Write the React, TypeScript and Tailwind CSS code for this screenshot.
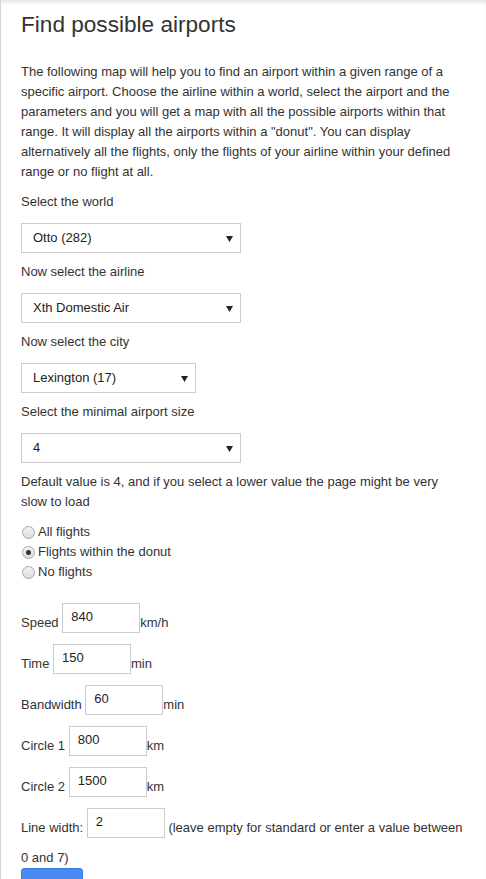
import React from "react";

const font = { fontFamily: '"Liberation Sans", Arial, sans-serif' };

function Select({ value, width }: { value: string; width: string }) {
  return (
    <div className={`relative mt-[11px] h-[30px] ${width} border border-[#cccccc] bg-white`}>
      <div className="pl-[11px] leading-[28px] text-[13px] text-[#222]">{value}</div>
      <svg className="absolute right-[7px] top-[12px]" width="7" height="6" viewBox="0 0 7 6">
        <polygon points="0,0 7,0 3.5,6" fill="#222" />
      </svg>
    </div>
  );
}

function Field({ label, value, unit, w = "w-[78px]" }: { label: string; value: string; unit: string; w?: string }) {
  return (
    <div className="flex items-end h-[30px] mb-[11px]">
      <span className="leading-5">{label}&nbsp;</span>
      <div className={`h-[30px] ${w} border border-[#cccccc] bg-white pl-[8px] leading-[26px] text-[13px] text-[#222]`}>{value}</div>
      <span className="leading-5">{unit}</span>
    </div>
  );
}

function Radio({ label, checked }: { label: string; checked?: boolean }) {
  return (
    <div className="flex items-center h-5">
      <span className="ml-[1px] mr-[3px] w-[13px] h-[13px] rounded-full border border-[#a8a8a8] bg-gradient-to-b from-[#f4f4f4] to-[#dcdcdc] flex items-center justify-center">
        {checked && <span className="w-[5px] h-[5px] rounded-full bg-[#333]" />}
      </span>
      <span>{label}</span>
    </div>
  );
}

export default function App() {
  return (
    <div style={font} className="min-h-[879px] bg-white border-l border-[#d4d4d4] shadow-[inset_0_4px_4px_-2px_rgba(0,0,0,0.12)] text-[13px] leading-5 text-[#333] pl-[20px] pr-[20px] overflow-hidden h-[879px]">
      <h1 className="pt-[12px] text-[22.6px] leading-[26px] text-[#333] font-normal">Find possible airports</h1>
      <p className="mt-[24px] mb-[10px]">
        The following map will help you to find an airport within a given range of a specific airport. Choose the airline within a world, select the airport and the parameters and you will get a map with all the possible airports within that range. It will display all the airports within a "donut". You can display alternatively all the flights, only the flights of your airline within your defined range or no flight at all.
      </p>
      <div>Select the world</div>
      <Select value="Otto (282)" width="w-[220px]" />
      <div className="mt-[9px]">Now select the airline</div>
      <Select value="Xth Domestic Air" width="w-[220px]" />
      <div className="mt-[9px]">Now select the city</div>
      <Select value="Lexington (17)" width="w-[175px]" />
      <div className="mt-[9px]">Select the minimal airport size</div>
      <Select value="4" width="w-[220px]" />
      <p className="mt-[9px] pr-[20px]">Default value is 4, and if you select a lower value the page might be very slow to load</p>
      <div className="mt-[10px]">
        <Radio label="All flights" />
        <Radio label="Flights within the donut" checked />
        <Radio label="No flights" />
      </div>
      <div className="mt-[21px]">
        <Field label="Speed" value="840" unit="km/h" />
        <Field label="Time" value="150" unit="min" />
        <Field label="Bandwidth" value="60" unit="min" />
        <Field label="Circle 1" value="800" unit="km" />
        <Field label="Circle 2" value="1500" unit="km" />
        <div className="flex items-end h-[30px]">
          <span className="leading-5">Line width:&nbsp;</span>
          <div className="h-[30px] w-[78px] border border-[#cccccc] bg-white pl-[8px] leading-[26px] text-[13px] text-[#222]">2</div>
          <span className="leading-5 whitespace-nowrap">&nbsp;(leave empty for standard or enter a value between</span>
        </div>
        <div className="mt-[10px]">0 and 7)</div>
        <button className="mt-0 h-[32px] px-[10px] bg-[#4a8af4] border border-[#3b7be8] rounded-t-[3px] text-white text-[13px]">Submit</button>
      </div>
    </div>
  );
}
